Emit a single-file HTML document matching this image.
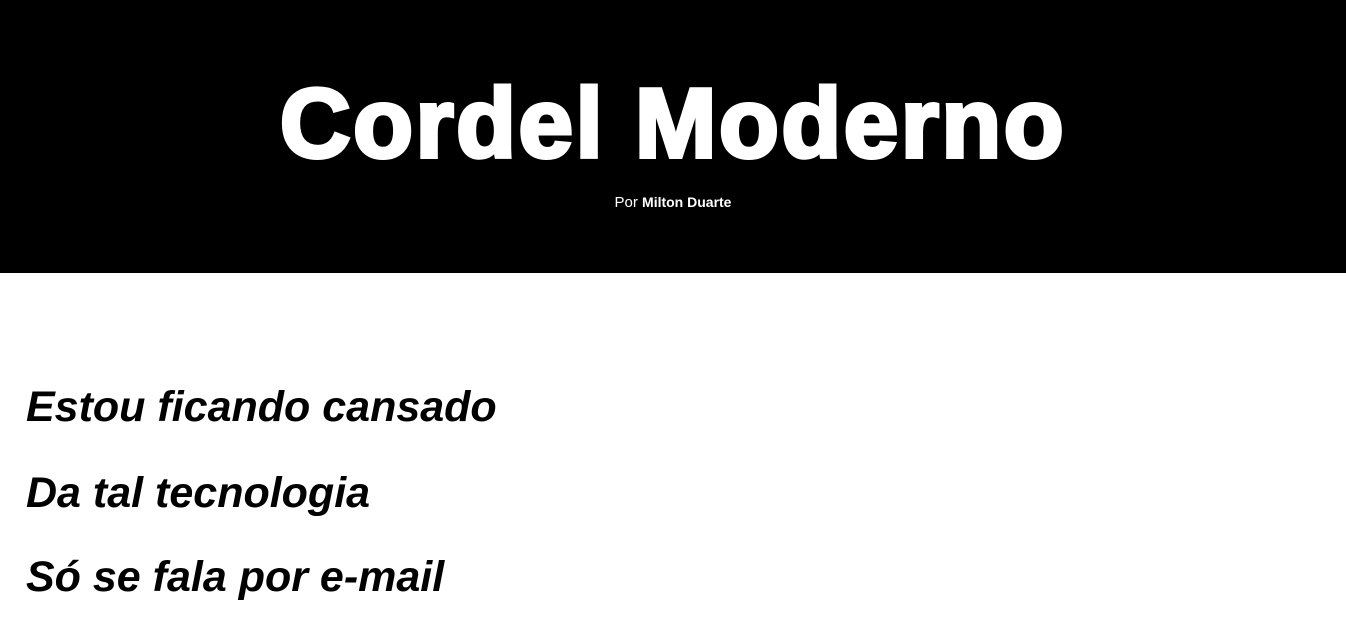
<!DOCTYPE html>
<html><head><meta charset="utf-8"><style>
html,body{margin:0;padding:0;background:#fff;width:1346px;height:629px;overflow:hidden}
header{position:absolute;left:0;top:0;width:1346px;height:273px;background:#000;color:#fff;font-family:"Liberation Sans",sans-serif}
h1{position:absolute;left:0;width:1346px;top:63px;margin:0;text-align:center;font-size:98px;line-height:120px;font-weight:bold;letter-spacing:2.5px;-webkit-text-stroke:4px #fff}
.by{position:absolute;left:0;width:1346px;top:193px;text-align:center;font-size:15px;line-height:18px}
.by b{font-size:14px}
p{position:absolute;left:26px;margin:0;font-family:"Liberation Sans",sans-serif;font-style:italic;font-weight:bold;font-size:43px;line-height:50px;color:#000;letter-spacing:0px}
</style></head><body>
<header><h1>Cordel Moderno</h1><div class="by">Por <b>Milton Duarte</b></div></header>
<p style="top:382px">Estou ficando cansado</p>
<p style="top:468px">Da tal tecnologia</p>
<p style="top:552px">Só se fala por e-mail</p>
</body></html>
